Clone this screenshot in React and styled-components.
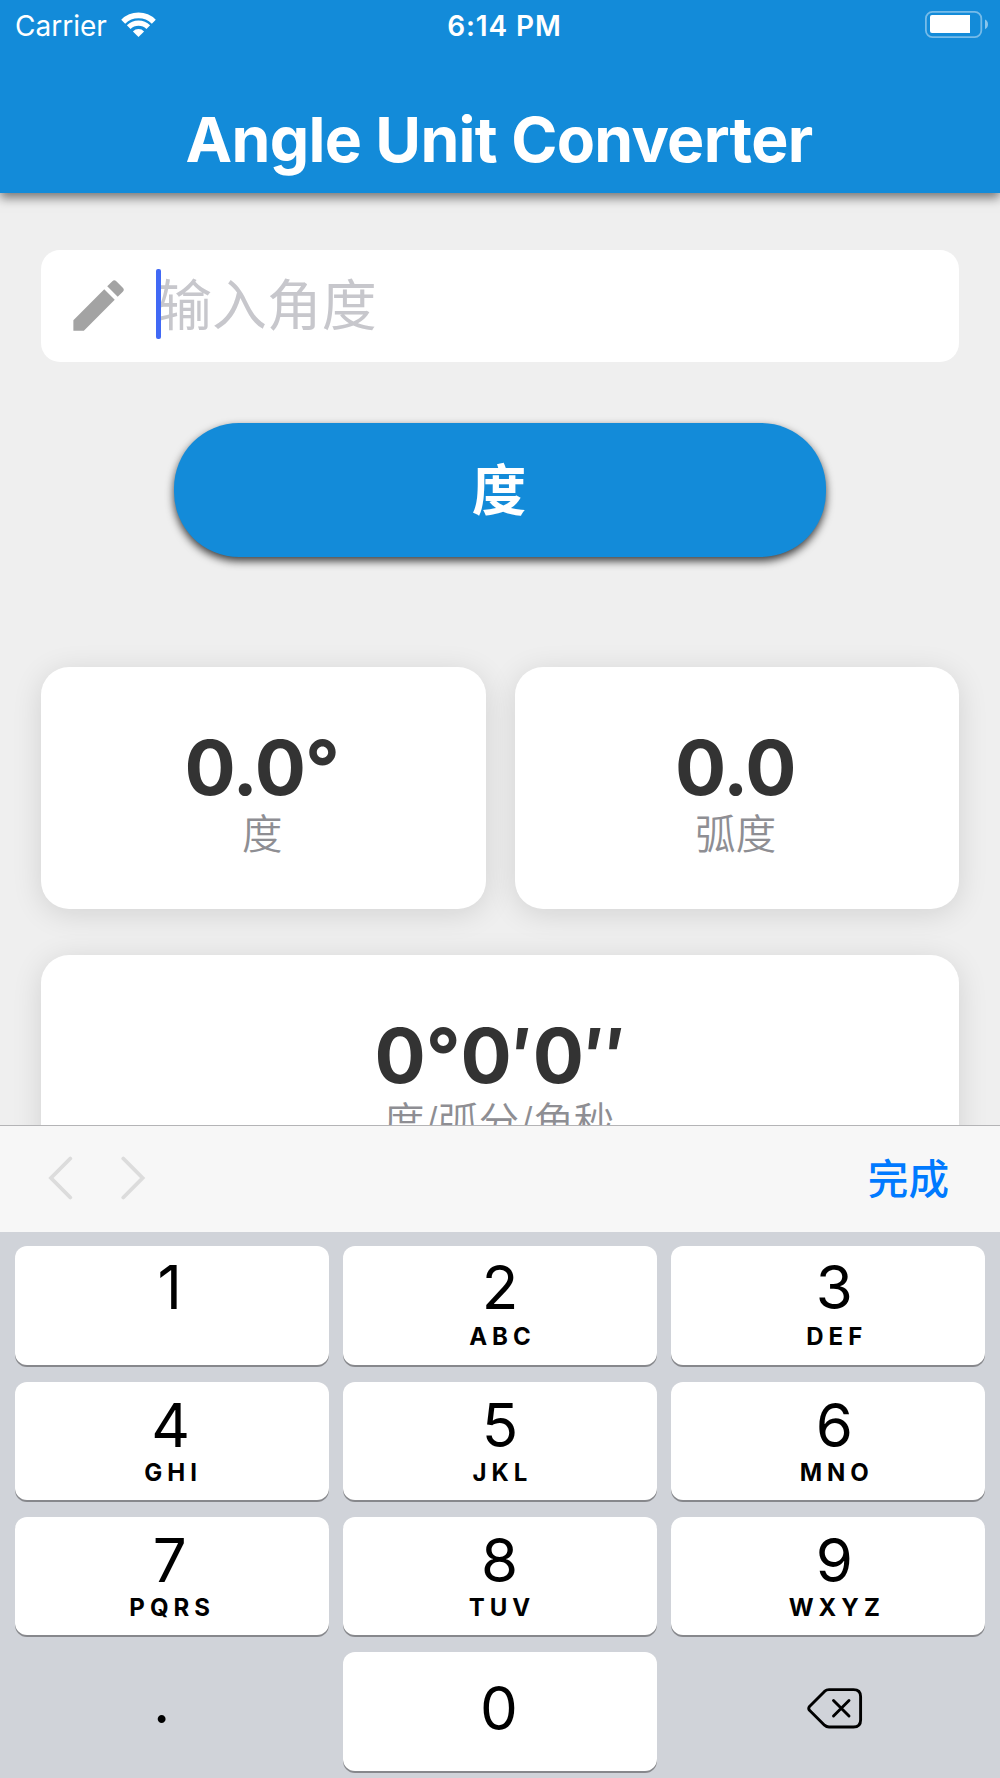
import React from 'react';
import styled, { createGlobalStyle } from 'styled-components';
import { MdEdit } from 'react-icons/md';

const blue = '#138bd9';

const GlobalStyle = createGlobalStyle`
*{
box-sizing:border-box;
}
body{
margin:0;
background:#efefef;
font-family:Inter, "Noto Sans CJK SC", sans-serif;
}
`;

const Screen = styled.div`
display:flex;
flex-direction:column;
width:1000px;
height:1778px;
overflow:hidden;
background:#efefef;
`;

const Header = styled.header`
flex:none;
height:193px;
position:relative;
z-index:1;
color:#fff;
background:${blue};
box-shadow:0 5px 10px rgba(0,0,0,0.5);
`;

const StatusBar = styled.div`
display:flex;
align-items:center;
height:51px;
padding:0 12px 0 15px;
font-size:28px;
`;

const StatusSide = styled.div`
display:flex;
flex:1;
align-items:center;
gap:14px;
justify-content:${(props) => props.$end ? 'flex-end' : 'flex-start'};
letter-spacing:0;
svg{
display:block;
margin-bottom:2px;
}
`;

const Time = styled.div`
font-weight:600;
letter-spacing:0.9px;
padding-left:6px;
`;

const Title = styled.h1`
margin:56px 2px 0 0;
text-align:center;
font-size:62.5px;
line-height:64px;
font-weight:700;
letter-spacing:-0.7px;
`;

const Body = styled.main`
flex:1;
min-height:0;
overflow:hidden;
display:flex;
flex-direction:column;
padding:57px 41px 0;
`;

const InputBox = styled.div`
flex:none;
display:flex;
align-items:center;
height:112px;
padding:0 0 2px 23.5px;
border-radius:19px;
background:#fff;
color:#a3a3a3;
`;

const Caret = styled.span`
width:5px;
height:70px;
margin:-3px -4px 0 24.5px;
border-radius:2px;
background:#4169f5;
z-index:1;
`;

const Placeholder = styled.span`
font-size:54.9px;
font-weight:400;
line-height:70px;
color:#c7c7cc;
`;

const UnitButton = styled.button`
flex:none;
align-self:center;
width:652px;
height:134px;
margin:61px 0 110px;
padding:0 2px 7px 0;
border:0;
border-radius:65px;
font-family:inherit;
font-size:54.5px;
font-weight:600;
color:#fff;
background:${blue};
box-shadow:0 4px 9px rgba(0,0,0,0.75);
`;

const Cards = styled.div`
display:grid;
grid-template-columns:1fr 1fr;
gap:46px 29px;
`;

const Card = styled.div`
height:242px;
padding-top:62px;
border-radius:28px;
text-align:center;
background:#fff;
box-shadow:0 5px 30px rgba(0,0,0,0.12);
grid-column:${(props) => props.$wide ? 'span 2' : 'auto'};
`;

const Value = styled.div`
margin-right:${(props) => props.$tight ? '3px' : '0'};
font-size:76px;
line-height:76px;
font-weight:700;
letter-spacing:${(props) => props.$tight ? '-0.9px' : '0'};
color:#333;
`;

const Unit = styled.div`
margin:5px 2px 0 0;
font-size:40.4px;
line-height:50px;
font-weight:350;
color:#8e8e93;
`;

const Keyboard = styled.div`
flex:none;
height:653px;
background:#d0d3d9;
`;

const Toolbar = styled.div`
display:flex;
align-items:center;
justify-content:space-between;
height:107px;
padding:0 51px 2px 48px;
border-top:1px solid #b4b4b6;
background:#f7f7f7;
`;

const Done = styled.span`
margin-bottom:3px;
font-size:40.6px;
font-weight:500;
color:#007aff;
`;

const Keys = styled.div`
display:grid;
grid-template-columns:repeat(3, 314px);
grid-auto-rows:118.3px;
gap:17px 14.3px;
padding:14.4px 0 0 14.7px;
`;

const Key = styled.div`
display:flex;
flex-direction:column;
align-items:center;
padding-top:${(props) => props.$top}px;
padding-left:${(props) => props.$shift > 0 ? props.$shift : 0}px;
padding-right:${(props) => props.$shift < 0 ? -props.$shift : 0}px;
border-radius:12px;
background:${(props) => props.$flat ? 'none' : '#fff'};
box-shadow:${(props) => props.$flat ? 'none' : '0 2px 0 #87888c'};
`;

const Digit = styled.span`
font-size:60px;
line-height:60px;
font-weight:370;
color:#000;
`;

const Letters = styled.span`
margin-top:auto;
margin-bottom:15.4px;
font-size:24px;
line-height:24px;
font-weight:700;
letter-spacing:5px;
margin-right:-5px;
color:#000;
`;

const keys = [
  { digit: '1', top: 10.6, shift: -4 },
  { digit: '2', letters: 'ABC', top: 10.6, shift: 0 },
  { digit: '3', letters: 'DEF', top: 10.6, shift: 12 },
  { digit: '4', letters: 'GHI', top: 13, shift: -2 },
  { digit: '5', letters: 'JKL', top: 13, shift: 0 },
  { digit: '6', letters: 'MNO', top: 13, shift: 12 },
  { digit: '7', letters: 'PQRS', top: 13, shift: -4 },
  { digit: '8', letters: 'TUV', top: 13, shift: -1 },
  { digit: '9', letters: 'WXYZ', top: 13, shift: 12 },
  { digit: '.', top: 18.7, shift: -20, flat: true },
  { digit: '0', top: 25.3, shift: -2 },
];

const Wifi = () => (
  <svg width="35" height="25" viewBox="0 0 35 25" fill="none" stroke="#fff">
    <path d="M2.2 9.7A21.7 21.7 0 0 1 32.8 9.7" strokeWidth="5.6" />
    <path d="M7.7 15.2A13.9 13.9 0 0 1 27.3 15.2" strokeWidth="5.2" />
    <path d="M17.5 25L11.9 19.4A8 8 0 0 1 23.1 19.4Z" fill="#fff" stroke="none" />
  </svg>
);

const Battery = () => (
  <svg width="63" height="27" viewBox="0 0 63 27">
    <rect x="0.9" y="0.9" width="55.4" height="25.2" rx="6.5" fill="none" stroke="#fff" strokeOpacity="0.42" strokeWidth="1.8" />
    <path d="M7 4H45V22H7Q5 22 5 20V6Q5 4 7 4Z" fill="#fff" />
    <path d="M60 8.5Q63 10 63 13.3T60 18.3Z" fill="#fff" fillOpacity="0.5" />
  </svg>
);

const Arrows = () => (
  <svg width="98" height="44" viewBox="0 0 98 44" fill="none" stroke="#dcdcdc" strokeWidth="3.8" strokeLinecap="round">
    <path d="M22.3 2.5L3 22L22.3 41.5" />
    <path d="M75.3 2.5L94.6 22L75.3 41.5" />
  </svg>
);

const Backspace = () => (
  <svg width="56" height="41" viewBox="0 0 56 41" fill="none" stroke="#000" strokeWidth="2.9" strokeLinecap="round" strokeLinejoin="round">
    <path d="M22 1.6H46.5Q53.6 1.6 53.6 8.6V32Q53.6 39 46.5 39H22Q19.5 39 17.5 37.2L2.5 22.3Q1 20.4 2.5 18.5L17.5 3.4Q19.5 1.6 22 1.6Z" />
    <path d="M26.5 12.5L42 28M42 12.5L26.5 28" />
  </svg>
);

const App = () => {
  return <>
    <GlobalStyle />
    <Screen>
      <Header>
        <StatusBar>
          <StatusSide>Carrier<Wifi /></StatusSide>
          <Time>6:14 PM</Time>
          <StatusSide $end><Battery /></StatusSide>
        </StatusBar>
        <Title>Angle Unit Converter</Title>
      </Header>
      <Body>
        <InputBox>
          <MdEdit size={67} />
          <Caret />
          <Placeholder>输入角度</Placeholder>
        </InputBox>
        <UnitButton>度</UnitButton>
        <Cards>
          <Card>
            <Value $tight>0.0°</Value>
            <Unit>度</Unit>
          </Card>
          <Card>
            <Value $tight>0.0</Value>
            <Unit>弧度</Unit>
          </Card>
          <Card $wide>
            <Value>0°0′0″</Value>
            <Unit>度/弧分/角秒</Unit>
          </Card>
        </Cards>
      </Body>
      <Keyboard>
        <Toolbar>
          <Arrows />
          <Done>完成</Done>
        </Toolbar>
        <Keys>
          {keys.map((key) => (
            <Key key={key.digit} $top={key.top} $shift={key.shift} $flat={key.flat}>
              <Digit>{key.digit}</Digit>
              {key.letters && <Letters>{key.letters}</Letters>}
            </Key>
          ))}
          <Key $top={36} $shift={13} $flat>
            <Backspace />
          </Key>
        </Keys>
      </Keyboard>
    </Screen>
  </>
}

export default App
